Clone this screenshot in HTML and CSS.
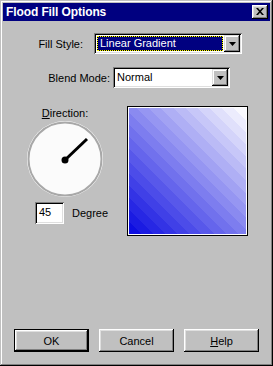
FILE: index.html
```html
<!DOCTYPE html>
<html>
<head>
<meta charset="utf-8">
<link rel="stylesheet" href="styles.css">
</head>
<body>
<div class="window">
  <div class="titlebar">
    <span class="title">Flood Fill Options</span>
    <span class="close">
      <svg width="8" height="7" viewBox="0 0 8 7"><path d="M0 0h2l2 2.3L6 0h2L5 3.5 8 7H6L4 4.7 2 7H0l3-3.5z" fill="#000"/></svg>
    </span>
  </div>

  <div class="row row-fill">
    <span class="lbl lbl-fill">Fill Style:</span>
    <div class="combo combo-fill">
      <span class="value selected">Linear Gradient</span>
      <span class="drop"><svg width="7" height="4" viewBox="0 0 7 4"><path d="M0 0h7L3.5 4z" fill="#000"/></svg></span>
    </div>
  </div>

  <div class="row row-blend">
    <span class="lbl lbl-blend">Blend Mode:</span>
    <div class="combo combo-blend">
      <span class="value">Normal</span>
      <span class="drop"><svg width="7" height="4" viewBox="0 0 7 4"><path d="M0 0h7L3.5 4z" fill="#000"/></svg></span>
    </div>
  </div>

  <div class="main">
    <div class="dir-col">
      <div class="dir-label"><u>D</u>irection:</div>
      <svg class="dial" width="78" height="78" viewBox="0 0 78 78">
        <circle cx="39" cy="39" r="38" fill="#fff"/>
        <circle cx="39" cy="39" r="36.5" fill="#fbfbfb" stroke="#a8a8a8" stroke-width="2"/>
        <line x1="39" y1="40" x2="61" y2="19" stroke="#000" stroke-width="3"/>
        <circle cx="39" cy="40" r="3.5" fill="#000"/>
      </svg>
      <div class="deg-row">
        <div class="input">45</div>
        <span class="deg">Degree</span>
      </div>
    </div>
    <div class="preview"><div class="grad"></div></div>
  </div>

  <div class="buttons">
    <div class="btn btn-default"><span class="btn-face">OK</span></div>
    <div class="btn"><span class="btn-face">Cancel</span></div>
    <div class="btn"><span class="btn-face"><u>H</u>elp</span></div>
  </div>
</div>
</body>
</html>
```

FILE: styles.css
```css
* { box-sizing: border-box; }

body {
  margin: 0;
  background: #c0c0c0;
  font-family: "Liberation Sans", Arial, sans-serif;
  font-size: 11px;
  color: #000;
}

.window {
  width: 273px;
  height: 366px;
  padding: 3px;
  display: flex;
  flex-direction: column;
  background: #c0c0c0;
  box-shadow: inset -1px -1px #000, inset 1px 1px #c0c0c0,
              inset -2px -2px #808080, inset 2px 2px #fff;
}

.titlebar {
  height: 18px;
  background: #000080;
  color: #fff;
  display: flex;
  align-items: center;
  padding: 0 2px 0 3px;
}

.title {
  flex: 1;
  font-weight: bold;
  font-size: 12px;
  letter-spacing: -0.1px;
}

.close {
  width: 16px;
  height: 14px;
  background: #c0c0c0;
  display: flex;
  align-items: center;
  justify-content: center;
  padding-bottom: 1px;
  box-shadow: inset -1px -1px #000, inset 1px 1px #fff,
              inset -2px -2px #808080, inset 2px 2px #dfdfdf;
}

.row {
  display: flex;
  align-items: center;
  height: 21px;
}

.row-fill { margin-top: 12px; }
.row-blend { margin-top: 13px; }

.lbl { text-align: right; }
.lbl-fill { width: 80px; margin-right: 11px; }
.lbl-blend { width: 107px; margin-right: 3px; }

.combo {
  height: 21px;
  background: #fff;
  padding: 2px;
  display: flex;
  box-shadow: inset 1px 1px #808080, inset -1px -1px #fff,
              inset 2px 2px #000, inset -2px -2px #dfdfdf;
}

.combo-fill { width: 148px; }
.combo-blend { width: 117px; }

.value {
  flex: 1;
  line-height: 17px;
  padding-left: 2px;
}

.selected {
  margin: 1px;
  line-height: 13px;
  padding-left: 2px;
  color: #fff;
  border: 1px dotted #ffff00;
  background: linear-gradient(#000080, #000080) padding-box, #000;
}

.drop {
  width: 16px;
  height: 17px;
  background: #c0c0c0;
  display: flex;
  align-items: center;
  justify-content: center;
  box-shadow: inset -1px -1px #000, inset 1px 1px #dfdfdf,
              inset -2px -2px #808080, inset 2px 2px #fff;
}

.main {
  display: flex;
  margin-top: 18px;
}

.dir-col {
  width: 124px;
  display: flex;
  flex-direction: column;
  align-items: center;
}

.dir-label {
  margin-top: 1px;
  line-height: 13px;
}

.dial { display: block; }

.deg-row {
  align-self: flex-start;
  margin-left: 32px;
  margin-top: 4px;
  display: flex;
  align-items: center;
}

.input {
  width: 29px;
  height: 22px;
  background: #fff;
  padding: 2px 0 0 4px;
  line-height: 17px;
  box-shadow: inset 1px 1px #808080, inset -1px -1px #fff,
              inset 2px 2px #000, inset -2px -2px #dfdfdf;
}

.deg { margin-left: 8px; }

.preview {
  width: 121px;
  height: 130px;
  border: 1px solid #000;
  padding: 1px;
  background: #fff;
}

.grad {
  width: 100%;
  height: 100%;
  background: linear-gradient(45deg,
    rgb(14,14,225) 0% 5%,
    rgb(27,27,226) 5% 10%,
    rgb(39,39,228) 10% 15%,
    rgb(51,51,229) 15% 20%,
    rgb(64,64,231) 20% 25%,
    rgb(76,76,233) 25% 30%,
    rgb(88,88,234) 30% 35%,
    rgb(101,101,236) 35% 40%,
    rgb(113,113,237) 40% 45%,
    rgb(125,125,239) 45% 50%,
    rgb(138,138,240) 50% 55%,
    rgb(150,150,242) 55% 60%,
    rgb(162,162,243) 60% 65%,
    rgb(175,175,245) 65% 70%,
    rgb(187,187,246) 70% 75%,
    rgb(199,199,248) 75% 80%,
    rgb(212,212,250) 80% 85%,
    rgb(224,224,251) 85% 90%,
    rgb(236,236,253) 90% 95%,
    rgb(249,249,254) 95% 100%);
}

.buttons {
  margin-top: auto;
  margin-bottom: 11px;
  padding-left: 11px;
  display: flex;
  gap: 10px;
}

.btn {
  width: 75px;
  height: 23px;
  display: flex;
}

.btn-face {
  flex: 1;
  display: flex;
  align-items: center;
  justify-content: center;
  background: #c0c0c0;
  box-shadow: inset -1px -1px #000, inset 1px 1px #fff,
              inset -2px -2px #808080, inset 2px 2px #dfdfdf;
}

.btn-default { border: 1px solid #000; }
```
